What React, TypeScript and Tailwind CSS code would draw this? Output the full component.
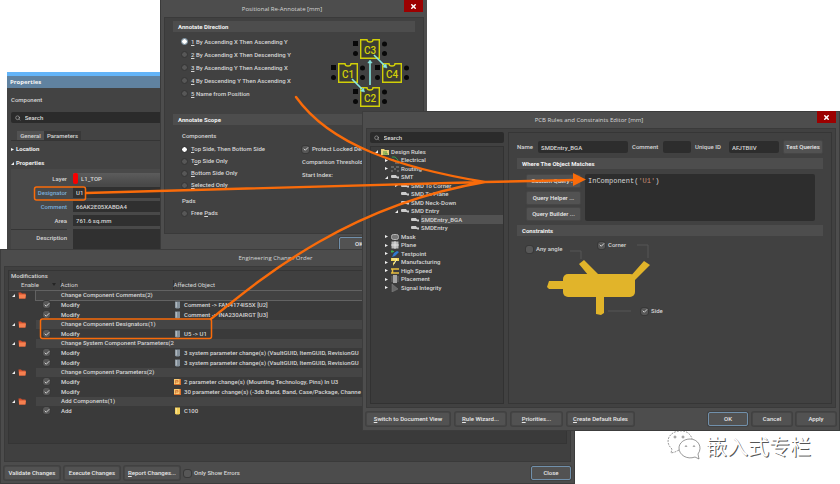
import type { ReactNode } from "react";
import { Search, X, Check } from "lucide-react";

const ORANGE = "#f96b0a";

const buttonBase =
  "h-[14px] shrink-0 whitespace-nowrap rounded-xs border bg-[#525252] text-center text-[#e8e8e8] shadow-[0_0_0_1px_#414141]";

function Button({ children, className = "", primary = false }: { children: ReactNode; className?: string; primary?: boolean }) {
  return (
    <button type="button" className={`${buttonBase} ${primary ? "border-[#7190ab]" : "border-[#464646]"} ${className}`}>
      {children}
    </button>
  );
}

function TitleBar({ title, className = "" }: { title: string; className?: string }) {
  return (
    <header className={`relative flex items-center justify-center ${className}`}>
      <h2 className="font-['Open_Sans',sans-serif]">{title}</h2>
      <button
        type="button"
        aria-label="Close window"
        className="absolute right-1 top-0 flex h-3 w-[19px] items-center justify-center bg-[#9c0000] text-white"
      >
        <X className="size-[7px]" strokeWidth={5} />
      </button>
    </header>
  );
}

function SectionTitle({ children }: { children: ReactNode }) {
  return <h3 className="flex h-[11px] items-center bg-[#4d4d4d] pl-[5px] font-bold text-[#f2f2f2]">{children}</h3>;
}

function CheckBox({ checked = false, ariaLabel }: { checked?: boolean; ariaLabel?: string }) {
  return (
    <span className="relative flex size-[7px] shrink-0 items-center justify-center rounded-xs bg-[#575757] outline outline-[#383838]">
      <input
        type="checkbox"
        aria-label={ariaLabel}
        defaultChecked={checked}
        className="peer absolute inset-0 m-0 size-full appearance-none"
      />
      <Check className="pointer-events-none hidden size-[6px] text-[#d0d0d0] peer-checked:block" strokeWidth={4} />
    </span>
  );
}

function Tick({ label, checked = false }: { label: string; checked?: boolean }) {
  return (
    <label className="flex items-center gap-[3px] whitespace-nowrap">
      <CheckBox checked={checked} />
      <span>{label}</span>
    </label>
  );
}

function Radio({ name, hotkey, before = "", label, checked = false, focus = false, className = "h-3" }: {
  name: string;
  hotkey: string;
  before?: string;
  label: string;
  checked?: boolean;
  focus?: boolean;
  className?: string;
}) {
  return (
    <label className={`flex items-center gap-1 whitespace-nowrap ${className}`}>
      <span
        className={`flex size-[5px] shrink-0 rounded-full outline ${focus ? "outline-[#8fa9bb]" : "outline-[#383838]"}`}
      >
        <input
          type="radio"
          name={name}
          defaultChecked={checked}
          className="m-0 size-[5px] appearance-none rounded-full bg-[#575757] checked:bg-white"
        />
      </span>
      <span>
        {before}
        <u>{hotkey}</u>
        {label}
      </span>
    </label>
  );
}

function Caret({ open = false, className = "" }: { open?: boolean; className?: string }) {
  return (
    <svg viewBox="0 0 4 4" className={`size-[3px] shrink-0 fill-[#f0f0f0] ${className}`} aria-hidden="true">
      {open ? <path d="M4 0V4H0Z" /> : <path d="M0 0L4 2L0 4Z" />}
    </svg>
  );
}

function PropertiesPanel() {
  return (
    <section className="absolute left-[7px] top-[72px] w-[180px] bg-[#434343]">
      <header className="flex h-4 items-center border-t-4 border-[#63b4f8] bg-[#6082a0] pl-[3px] font-bold text-[#f4f4f4]">
        <h2 className="font-['Open_Sans',sans-serif]">Properties</h2>
      </header>
      <div className="flex flex-col pl-1">
        <p className="mt-2 leading-[8px]">Component</p>
        <label className="mt-2 flex h-[11px] items-center gap-1 rounded-xs bg-[#2b2b2b] pl-1">
          <Search className="size-[6px]" />
          <input aria-label="Search properties" placeholder="Search" className="w-full placeholder:text-[#dddddd]" />
        </label>
        <nav className="mt-2 flex h-[10px] border-b border-[#353535] pl-[6px]">
          <button type="button" className="w-[27px] bg-[#525252]">General</button>
          <button type="button" className="w-[37px] bg-[#383838]">Parameters</button>
        </nav>
        <h3 className="mt-1 flex h-[8px] items-center gap-[2px] font-bold text-[#eeeeee]">
          <Caret /> Location
        </h3>
        <h3 className="mt-[6px] flex h-[8px] items-center gap-[2px] font-bold text-[#eeeeee]">
          <Caret open /> Properties
        </h3>
        <div className="mt-[2px] grid grid-cols-[56px_1fr] items-center gap-x-[6px] gap-y-[3px] bg-[#494949] pt-1">
          <label htmlFor="layer" className="text-right">Layer</label>
          <div className="flex h-[11px] items-center bg-gradient-to-b from-[#5c5c5c] to-[#4a4a4a]">
            <span className="h-full w-[5px] rounded-xs bg-[#f80000]" />
            <select id="layer" className="ml-[3px] w-24 appearance-none">
              <option>L1_TOP</option>
            </select>
          </div>
          <label htmlFor="designator" className="text-right text-[#79aedb]">Designator</label>
          <input id="designator" defaultValue="U1" className="h-[11px] bg-[#303030] pl-[3px]" />
          <label htmlFor="comment" className="text-right text-[#79aedb]">Comment</label>
          <input id="comment" defaultValue="66AK2E05XABDA4" className="h-[11px] bg-[#303030] pl-[3px]" />
          <label htmlFor="area" className="text-right">Area</label>
          <input id="area" defaultValue="761.6 sq.mm" className="h-[11px] bg-[#303030] pl-[3px]" />
          <label htmlFor="description" className="self-start border-t border-[#353535] pt-1 text-right">Description</label>
          <textarea id="description" className="h-5 resize-none bg-[#303030]" />
        </div>
      </div>
    </section>
  );
}

const chips = [
  { name: "C3", x: 32, y: 2 },
  { name: "C1", x: 10, y: 26 },
  { name: "C4", x: 54, y: 26 },
  { name: "C2", x: 32, y: 50 },
];

function AnnotateDiagram() {
  return (
    <svg viewBox="0 0 84 74" className="h-[74px] w-[84px]" aria-label="Annotation order">
      {chips.map(({ name, x, y }) => (
        <g key={name} transform={`translate(${x} ${y})`}>
          <rect x="-7" y="2" width="5" height="5" fill="#080808" />
          <circle cx="-4.5" cy="14.5" r="2.5" fill="#080808" />
          <circle cx="24.5" cy="5" r="2.5" fill="#080808" />
          <circle cx="24.5" cy="14.5" r="2.5" fill="#080808" />
          <path d="M.7 .7H7Q7 3 10 3T13 .7H19.3V19.3H.7Z" fill="#3c3c34" stroke="#d1cf08" strokeWidth="1.4" />
          <text x="10" y="14.5" textAnchor="middle" fontSize="10" fill="#d1cf08">{name}</text>
        </g>
      ))}
      <g stroke="#87e6e0" strokeWidth="1.6" fill="#87e6e0">
        <path d="M24 42L34 52M42 48V25M46 18L57 29" />
        <path d="M36.500 55L32.500 54L35.500 51ZM42 23L39.800 26H44.200ZM59 31L55 30L58 27Z" strokeWidth=".5" />
      </g>
    </svg>
  );
}

function ReAnnotateDialog() {
  return (
    <section className="absolute left-40 top-0 w-[267px] border-l border-[#3a3a3a] bg-[#4d4d4d] pb-1">
      <TitleBar title="Positional Re-Annotate [mm]" className="h-[17px] pr-6" />
      <div className="mx-[3px] border border-[#3a3a3a] bg-[#414141] px-2 pb-[14px] pt-[3px]">
        <SectionTitle>Annotate Direction</SectionTitle>
        <div className="flex justify-between pl-[9px] pr-[3px]">
          <div className="pt-[3px]">
            <Radio name="direction" hotkey="1" label=" By Ascending X Then Ascending Y" checked focus className="h-[13px]" />
            <Radio name="direction" hotkey="2" label=" By Ascending X Then Descending Y" className="h-[13px]" />
            <Radio name="direction" hotkey="3" label=" By Ascending Y Then Ascending X" className="h-[13px]" />
            <Radio name="direction" hotkey="4" label=" By Descending Y Then Ascending X" className="h-[13px]" />
            <Radio name="direction" hotkey="5" label=" Name from Position" className="h-[13px]" />
          </div>
          <div className="pt-[5px]">
            <AnnotateDiagram />
          </div>
        </div>
        <div className="mt-[3px]">
          <SectionTitle>Annotate Scope</SectionTitle>
        </div>
        <div className="flex pl-[9px]">
          <div className="w-[120px] pt-[6px]">
            <p className="leading-[9px]">Components</p>
            <div className="pt-[3px]">
              <Radio name="scope" hotkey="T" label="op Side, Then Bottom Side" checked />
              <Radio name="scope" before="T" hotkey="o" label="p Side Only" />
              <Radio name="scope" hotkey="B" label="ottom Side Only" />
              <Radio name="scope" hotkey="S" label="elected Only" />
            </div>
            <p className="mt-[5px] leading-[10px]">Pads</p>
            <div className="pt-px">
              <Radio name="pads" before="Free " hotkey="P" label="ads" />
            </div>
          </div>
          <div className="flex flex-col gap-[5px] pt-[20px]">
            <Tick label="Protect Locked Des" checked />
            <p>Comparison Threshold</p>
            <p>Start Index:</p>
          </div>
        </div>
      </div>
      <div className="flex justify-end pr-12 pt-[3px]">
        <Button primary className="w-10">OK</Button>
      </div>
    </section>
  );
}

type Change = { group: string } | { action: string; object: string; kind: "part" | "param" | "new" };

const changes: Change[] = [
  { group: "Change Component Comments(2)" },
  { action: "Modify", object: "Comment -> FAN4174IS5X [U2]", kind: "part" },
  { action: "Modify", object: "Comment -> INA230AIRGT [U3]", kind: "part" },
  { group: "Change Component Designators(1)" },
  { action: "Modify", object: "U5 -> U1", kind: "part" },
  { group: "Change System Component Parameters(2" },
  { action: "Modify", object: "3 system parameter change(s) (VaultGUID, ItemGUID, RevisionGU", kind: "part" },
  { action: "Modify", object: "3 system parameter change(s) (VaultGUID, ItemGUID, RevisionGU", kind: "part" },
  { group: "Change Component Parameters(2)" },
  { action: "Modify", object: "2 parameter change(s) (Mounting Technology, Pins) In U3", kind: "param" },
  { action: "Modify", object: "30 parameter change(s) (-3db Band, Band, Case/Package, Channe", kind: "param" },
  { group: "Add Components(1)" },
  { action: "Add", object: "C100", kind: "new" },
];

function ObjectIcon({ kind }: { kind: "part" | "param" | "new" }) {
  if (kind === "param") {
    return (
      <svg viewBox="0 0 7 6" className="h-[6px] w-[7px]" aria-hidden="true">
        <rect width="7" height="6" fill="#d9702a" />
        <rect width="5.5" height="5" fill="#f8c873" />
        <path d="M1.500 4.500V1.500H4V3H2" fill="none" stroke="#c8672c" strokeWidth=".7" />
      </svg>
    );
  }
  const fill = kind === "new" ? "#f3cf57" : "#84909a";
  return (
    <svg viewBox="0 0 7 8" className="h-2 w-[7px]" aria-hidden="true">
      <path d="M1 .5H6V6.500L5 7.500H2L1 6.500Z" fill={fill} />
      <path d="M2.300 1V6.500" stroke="#ffffff" strokeOpacity=".45" />
    </svg>
  );
}

function Folder() {
  return (
    <svg viewBox="0 0 8 7" className="h-[7px] w-2" aria-hidden="true">
      <path d="M.5 .5H3L4 1.500H7.500V6.500H1Z" fill="#d9502c" />
      <path d="M1 2.500H8L7.300 6.500H1Z" fill="#f58050" />
    </svg>
  );
}

function ChangeOrderWindow() {
  return (
    <section className="absolute left-0 top-[249px] w-[575px] border border-[#3c3c3c] bg-[#4c4c4c] px-[3px] pb-[3px]">
      <header className="flex h-4 items-center justify-center pr-6">
        <h2 className="font-['Open_Sans',sans-serif]">Engineering Change Order</h2>
      </header>
      <div className="border border-[#3a3a3a] bg-[#404040] px-[3px] pb-[17px] pt-[3px]">
        <div className="min-h-[174px] border border-[#353535] bg-[#3a3a3a]">
          <p className="flex h-[9px] items-center bg-[#404040] pl-[2px]">Modifications</p>
          <table className="w-full table-fixed border-collapse text-left">
            <colgroup>
              <col className="w-[51px]" />
              <col className="w-[113px]" />
              <col />
            </colgroup>
            <thead>
              <tr className="h-[10px] border-b border-[#505050] bg-[#404040]">
                <th className="p-0 pl-3 font-normal">
                  <span className="flex items-center justify-between pr-1">
                    Enable
                    <svg viewBox="0 0 4 3" className="h-[3px] w-1 fill-[#252525]" aria-hidden="true"><path d="M0 0H4L2 3Z" /></svg>
                  </span>
                </th>
                <th className="border-l border-[#303030] p-0 font-normal">Action</th>
                <th className="border-l border-[#303030] p-0 font-normal">Affected Object</th>
              </tr>
            </thead>
            <tbody>
              {changes.map((row, i) =>
                "group" in row ? (
                  <tr key={i} className="h-[9px]">
                    <td className="p-0">
                      <span className="flex items-center gap-[3px] pl-[3px]"><Caret open /><Folder /></span>
                    </td>
                    <td colSpan={2} className="p-0">
                      <span className={`-ml-6 flex h-[9px] items-center pl-[25px] ${i === 0 ? "bg-[#424242] outline outline-[#626262]" : "bg-[#454545]"}`}>
                        {row.group}
                      </span>
                    </td>
                  </tr>
                ) : (
                  <tr key={i} className="h-[10px]">
                    <td className="p-0 pl-[34px]"><CheckBox ariaLabel={`Enable change of ${row.object}`} checked /></td>
                    <td className="p-0 pl-px">{row.action}</td>
                    <td className="p-0">
                      <span className="flex items-center gap-[3px] whitespace-nowrap pl-px"><ObjectIcon kind={row.kind} />{row.object}</span>
                    </td>
                  </tr>
                ),
              )}
            </tbody>
          </table>
        </div>
      </div>
      <footer className="flex items-center gap-1 pt-1">
        <Button className="w-14">Validate Changes</Button>
        <Button className="w-14">Execute Changes</Button>
        <Button className="w-14"><u>R</u>eport Changes...</Button>
        <Tick label="Only Show Errors" />
        <Button primary className="ml-auto w-10">Close</Button>
      </footer>
    </section>
  );
}

type RuleIconKind = "folder" | "electrical" | "routing" | "smt" | "mask" | "plane" | "testpoint" | "manufacturing" | "speed" | "placement" | "signal";

function RuleIcon({ kind }: { kind: RuleIconKind }) {
  return (
    <svg viewBox="0 0 8 8" className="size-2 shrink-0" aria-hidden="true">
      {kind === "folder" && <><path d="M0 1H3L4 2H8V7H0Z" fill="#e9d27c" /><path d="M2 4H4M5 3V6M2 6H7" stroke="#4e9a3b" /></>}
      {kind === "electrical" && <><path d="M1 1H4L7 4V7" fill="none" stroke="#2f9a4a" /><path d="M0 4H3M4 7H8" stroke="#8c8c8c" /></>}
      {kind === "routing" && <path d="M0 2H3M5 2H8M0 6H2M3 4H5M6 6H8" stroke="#888888" />}
      {kind === "smt" && <path d="M0 3Q0 2 1 2H5L6 3.500H8V5.500H6.500L5.500 5H1Q0 5 0 4Z" fill="#cccccc" />}
      {kind === "mask" && <rect x=".5" y="1.500" width="7" height="5" rx="2" fill="#777777" stroke="#b5b5b5" />}
      {kind === "plane" && <><rect x=".5" y=".5" width="7" height="7" fill="#b8b8b8" /><path d="M4 0V8M0 4H8" stroke="#e8e8e8" strokeWidth=".8" /></>}
      {kind === "testpoint" && <><path d="M1 7L3 3L6 1L8 2L4 6Z" fill="#2f7ad0" /><path d="M1 0V3M0 1.500H3" stroke="#3fae4c" /></>}
      {kind === "manufacturing" && <><path d="M0 0H8V3H5L2 8V5L4 3H0Z" fill="#f0d552" /><path d="M1 1H6L3 6" stroke="#ffffff" strokeWidth=".6" fill="none" /></>}
      {kind === "speed" && <path d="M0 2H8M0 6H8M1.500 2V6" stroke="#e6bd3e" strokeWidth="1.500" />}
      {kind === "placement" && <><rect x="2" width="4" height="8" fill="#a5a5a5" /><path d="M1 1V7M7 1V7" stroke="#707070" /></>}
      {kind === "signal" && <path d="M1 0V8L7 5Z" fill="#686868" stroke="#858585" strokeWidth=".5" />}
    </svg>
  );
}

interface Rule {
  label: string;
  icon: RuleIconKind;
  indent: string;
  open?: boolean;
  leaf?: boolean;
  selected?: boolean;
}

const rules: Rule[] = [
  { label: "Design Rules", icon: "folder", indent: "pl-1", open: true },
  { label: "Electrical", icon: "electrical", indent: "pl-[14px]" },
  { label: "Routing", icon: "routing", indent: "pl-[14px]" },
  { label: "SMT", icon: "smt", indent: "pl-[14px]", open: true },
  { label: "SMD To Corner", icon: "smt", indent: "pl-6" },
  { label: "SMD To Plane", icon: "smt", indent: "pl-6", leaf: true },
  { label: "SMD Neck-Down", icon: "smt", indent: "pl-6", leaf: true },
  { label: "SMD Entry", icon: "smt", indent: "pl-6", open: true },
  { label: "SMDEntry_BGA", icon: "smt", indent: "pl-[34px]", leaf: true, selected: true },
  { label: "SMDEntry", icon: "smt", indent: "pl-[34px]", leaf: true },
  { label: "Mask", icon: "mask", indent: "pl-[14px]" },
  { label: "Plane", icon: "plane", indent: "pl-[14px]" },
  { label: "Testpoint", icon: "testpoint", indent: "pl-[14px]" },
  { label: "Manufacturing", icon: "manufacturing", indent: "pl-[14px]" },
  { label: "High Speed", icon: "speed", indent: "pl-[14px]" },
  { label: "Placement", icon: "placement", indent: "pl-[14px]" },
  { label: "Signal Integrity", icon: "signal", indent: "pl-[14px]" },
];

function RuleTree() {
  return (
    <ul className="mt-[3px] flex-1 border border-[#323232] bg-[#3c3c3c]">
      {rules.map((rule) => (
        <li key={rule.label} className={`flex items-center gap-[2px] odd:h-[9px] even:h-[8px] ${rule.indent}`}>
          <Caret open={rule.open} className={`mr-px ${rule.leaf ? "invisible" : ""}`} />
          <RuleIcon kind={rule.icon} />
          <span className={rule.selected ? "flex h-full flex-1 items-center bg-[#525252]" : ""}>{rule.label}</span>
        </li>
      ))}
    </ul>
  );
}

function ConstraintDrawing() {
  return (
    <div className="relative h-[84px]">
      <svg viewBox="0 0 140 84" className="h-[84px] w-[140px]" aria-label="Pad entry directions">
        <g fill="#e1b42a">
          <rect x="46" y="38" width="72" height="23" rx="5" />
          <path d="M32 45H48V53H32L30 51ZM79 59H87V77L84 79L79 78ZM62 28L67 24L83 40L76 45ZM112 42L127 25L133 29L116 46Z" />
        </g>
        <path d="M53 15H64V23M120 9H131V22M91 75H114" fill="none" stroke="#575757" />
      </svg>
      <div className="absolute left-[9px] top-[9px]"><Tick label="Any angle" /></div>
      <div className="absolute left-[81px] top-[5px]"><Tick label="Corner" checked /></div>
      <div className="absolute left-[124px] top-[71px]"><Tick label="Side" checked /></div>
    </div>
  );
}

function RulesEditor() {
  return (
    <section className="absolute left-[362px] right-0 top-[111px] border border-[#3c3c3c] bg-[#4d4d4d] px-[3px] pb-1">
      <TitleBar title="PCB Rules and Constraints Editor [mm]" className="-mx-1 -mt-px h-[17px] pr-6" />
      <div className="flex min-h-[280px] gap-1 border border-[#3a3a3a] bg-[#414141] p-[3px]">
        <div className="flex w-[134px] shrink-0 flex-col">
          <label className="flex h-[11px] items-center gap-1 rounded-xs bg-[#2b2b2b] pl-1">
            <Search className="size-[6px]" />
            <input aria-label="Search rules" placeholder="Search" className="w-full placeholder:text-[#dddddd]" />
          </label>
          <RuleTree />
        </div>
        <div className="min-w-0 flex-1 border border-[#363636] px-2 pt-2">
          <div className="flex h-3 items-center gap-1">
            <label htmlFor="rule-name" className="w-[17px]">Name</label>
            <input id="rule-name" defaultValue="SMDEntry_BGA" className="h-full w-[90px] rounded-xs bg-[#2d2d2d] pl-[3px]" />
            <label htmlFor="rule-comment" className="w-[27px]">Comment</label>
            <input id="rule-comment" className="h-full w-7 rounded-xs bg-[#2d2d2d]" />
            <label htmlFor="rule-id" className="w-[30px]">Unique ID</label>
            <input id="rule-id" defaultValue="AFJTBIIV" className="h-full w-[50px] rounded-xs bg-[#2d2d2d] pl-[3px]" />
            <Button className="w-10">Test Queries</Button>
          </div>
          <div className="mt-[5px]">
            <SectionTitle>Where The Object Matches</SectionTitle>
          </div>
          <div className="flex gap-1 pb-1 pl-[9px] pr-2 pt-[5px]">
            <div className="flex w-[55px] flex-col justify-between">
              <Button>Custom Query ...</Button>
              <Button>Query Helper ...</Button>
              <Button>Query Builder ...</Button>
            </div>
            <div className="min-h-[47px] flex-1 rounded-xs bg-[#2d2d2d] p-[3px] font-['Liberation_Mono',monospace] text-[7px] font-normal leading-[8px]">
              InComponent(<span className="text-[#c98d73]">'U1'</span>)
            </div>
          </div>
          <SectionTitle>Constraints</SectionTitle>
          <ConstraintDrawing />
        </div>
      </div>
      <footer className="flex items-center gap-[5px] pt-1">
        <Button className="w-[84px]"><u>S</u>witch to Document View</Button>
        <Button className="w-[51px]"><u>R</u>ule Wizard...</Button>
        <Button className="w-[51px]"><u>P</u>riorities...</Button>
        <Button className="w-[67px]"><u>C</u>reate Default Rules</Button>
        <div className="ml-auto flex gap-1">
          <Button primary className="w-10">OK</Button>
          <Button className="w-10">Cancel</Button>
          <Button className="w-10">Apply</Button>
        </div>
      </footer>
    </section>
  );
}

function Callouts() {
  return (
    <svg viewBox="0 0 840 484" className="pointer-events-none absolute left-0 top-0 h-[484px] w-[840px]" aria-hidden="true">
      <g fill="none" stroke={ORANGE} strokeLinecap="round">
        <rect x="34.500" y="187" width="51" height="13" rx="2" strokeWidth="1.500" />
        <rect x="40.500" y="319" width="171" height="19.500" rx="2" strokeWidth="1.500" />
        <path d="M296 97C330 145 400 168 485 182M86 193L485 182M211 319C265 275 350 205 485 182M485 182L576 180" strokeWidth="2.400" />
      </g>
      <path d="M573 173L586 179.500L573 186Z" fill={ORANGE} />
    </svg>
  );
}

function Watermark() {
  return (
    <div className="absolute left-[667px] top-[430px] flex items-center gap-1">
      <svg viewBox="0 0 35 30" className="h-[30px] w-[35px]" fill="none" stroke="#555555" strokeWidth=".6" aria-hidden="true">
        <path d="M12 20L8 22L4 23L5 19C-3 12 2 2 12 1C19 0 24 4 25 9" strokeDasharray="2 1" />
        <path d="M23 9C31 9 36 17 31 24L32 29L28 27C20 30 12 25 12 18C12 13 17 9 23 9Z" />
        <circle cx="8" cy="7" r="1" /><circle cx="16" cy="7" r="1" />
        <path d="M18 17Q19 14 20 17M26 17Q27 14 28 17" />
      </svg>
      <span className="font-['Noto_Sans_CJK_SC',sans-serif] text-[21px] font-normal leading-[30px] text-white [text-shadow:1px_1px_0_#555555]">
        嵌入式专栏
      </span>
    </div>
  );
}

export default function App() {
  return (
    <main className="relative min-h-screen overflow-hidden bg-white font-[Roboto,'Open_Sans',sans-serif] text-[6px] font-medium leading-[8px] text-[#d6d6d6]">
      <PropertiesPanel />
      <ReAnnotateDialog />
      <ChangeOrderWindow />
      <RulesEditor />
      <Callouts />
      <Watermark />
    </main>
  );
}
